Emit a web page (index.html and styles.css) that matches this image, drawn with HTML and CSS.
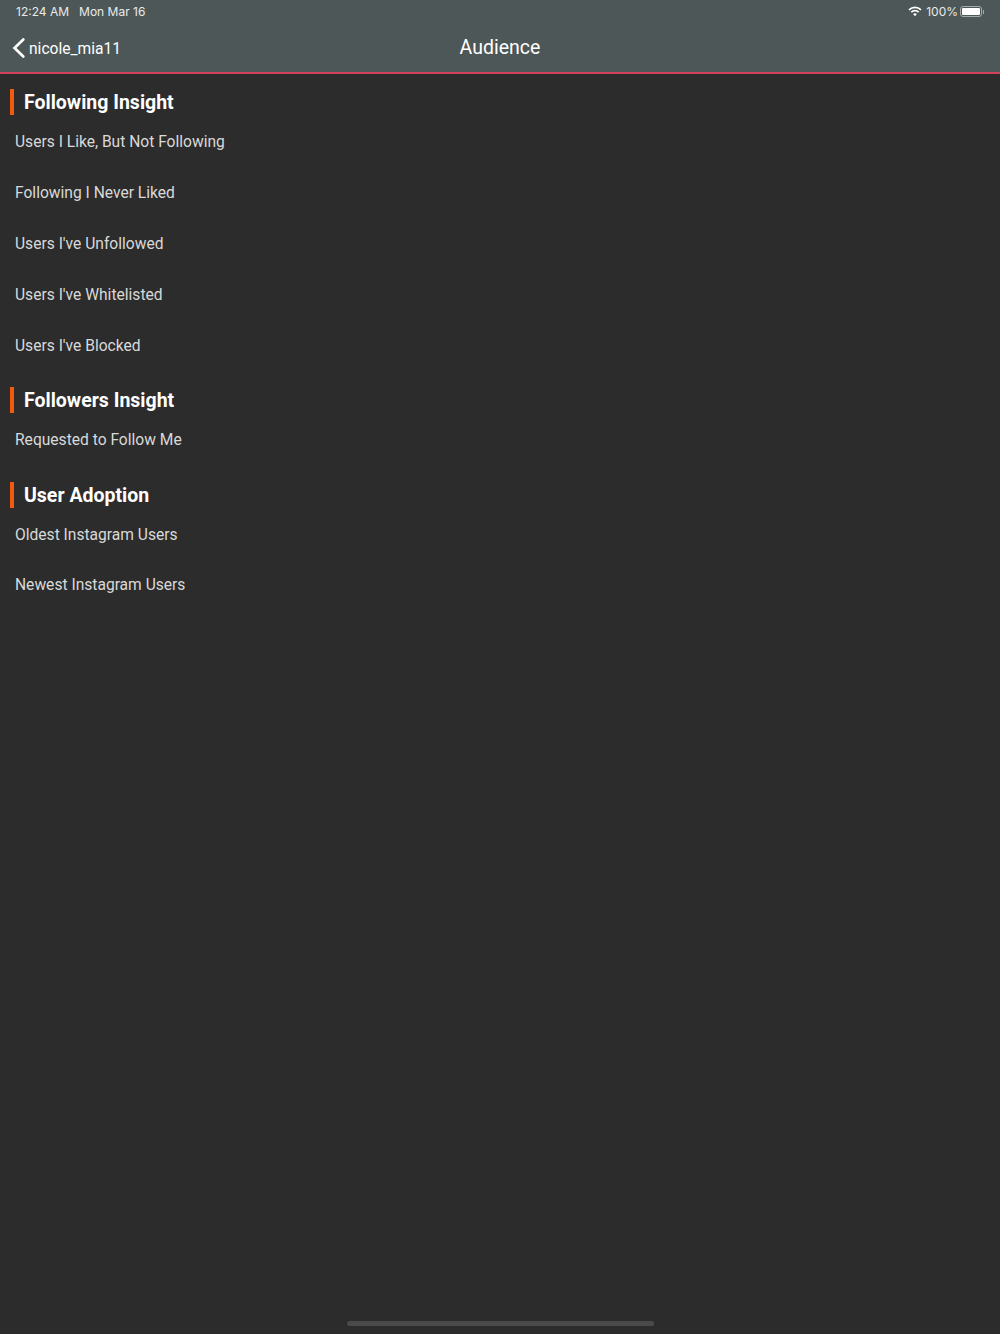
FILE: index.html
```html
<!DOCTYPE html>
<html lang="en">
<head>
    <meta charset="UTF-8">
    <title>Audience</title>
    <link rel="stylesheet" href="styles.css">
</head>
<body>
    <div class="screen">
        <!-- Status bar and navigation -->
        <header class="top-bar">
            <div class="status-bar">
                <div class="status-left">
                    <span>12:24 AM</span>
                    <span>Mon Mar 16</span>
                </div>
                <div class="status-right">
                    <svg class="wifi" width="14" height="11" viewBox="0 0 14 11">
                        <path d="M1 3.9 A8.6 8.6 0 0 1 13 3.9" fill="none" stroke="#fff" stroke-width="1.7"/>
                        <path d="M3.3 6.1 A5.3 5.3 0 0 1 10.7 6.1" fill="none" stroke="#fff" stroke-width="1.7"/>
                        <path d="M5.1 8.1 A2.7 2.7 0 0 1 8.9 8.1 L7 10.2 Z" fill="#fff"/>
                    </svg>
                    <span class="battery-pct">100%</span>
                    <div class="battery"><div class="battery-fill"></div></div>
                    <div class="battery-cap"></div>
                </div>
            </div>
            <nav class="nav-bar">
                <a class="back">
                    <svg width="13" height="20" viewBox="0 0 13 20">
                        <path d="M11.3 1.5 L2.5 10 L11.3 18.5" fill="none" stroke="#fff" stroke-width="2.6" stroke-linecap="round"/>
                    </svg>
                    <span class="back-label">nicole_mia11</span>
                </a>
                <div class="nav-title">Audience</div>
            </nav>
        </header>

        <main class="content">
            <section class="group">
                <h2 class="group-title">Following Insight</h2>
                <ul class="rows">
                    <li>Users I Like, But Not Following</li>
                    <li>Following I Never Liked</li>
                    <li>Users I've Unfollowed</li>
                    <li>Users I've Whitelisted</li>
                    <li>Users I've Blocked</li>
                </ul>
            </section>
            <section class="group">
                <h2 class="group-title">Followers Insight</h2>
                <ul class="rows">
                    <li>Requested to Follow Me</li>
                </ul>
            </section>
            <section class="group">
                <h2 class="group-title">User Adoption</h2>
                <ul class="rows">
                    <li>Oldest Instagram Users</li>
                    <li>Newest Instagram Users</li>
                </ul>
            </section>
        </main>

        <div class="home-bar"></div>
    </div>
</body>
</html>
```
FILE: styles.css
```css
html, body {
    margin: 0;
    padding: 0;
}

body {
    background-color: #2c2c2c;
    font-family: Roboto, "Liberation Sans", sans-serif;
    color: #fff;
}

.screen {
    height: 1334px;
    display: flex;
    flex-direction: column;
    overflow: hidden;
}

.top-bar {
    height: 72px;
    background-color: #4e5757;
    border-bottom: 2px solid #d2405a;
    flex-shrink: 0;
}

.status-bar {
    height: 23px;
    padding: 0 16px 0 16px;
    display: flex;
    justify-content: space-between;
    align-items: center;
    font-family: Inter, "Liberation Sans", sans-serif;
    font-size: 12px;
    color: #e8eaea;
}

.status-left {
    display: flex;
    gap: 10px;
}

.status-right {
    display: flex;
    align-items: center;
}

.wifi {
    margin-right: 4px;
}

.battery {
    width: 18px;
    height: 7px;
    padding: 1px;
    margin-left: 2px;
    border: 1px solid #a5abab;
    border-radius: 3px;
}

.battery-fill {
    height: 100%;
    background-color: #fff;
    border-radius: 1px;
}

.battery-cap {
    width: 1px;
    height: 4px;
    margin-left: 1px;
    background-color: #a5abab;
}

.nav-bar {
    height: 49px;
    display: flex;
    justify-content: center;
    align-items: center;
    position: relative;
}

.back {
    position: absolute;
    left: 12px;
    top: 15px;
    display: flex;
    align-items: flex-start;
    gap: 4px;
    font-size: 15.6px;
    line-height: 20px;
}

.back-label {
    padding-top: 1px;
}

.nav-title {
    font-size: 19.5px;
}

.content {
    flex: 1;
    padding-top: 15px;
}

.group {
    margin-bottom: 15.6px;
}

.group-title {
    margin: 0 0 2px 10px;
    padding-left: 10px;
    height: 26px;
    line-height: 28px;
    border-left: 4px solid #f4590f;
    font-size: 19.5px;
    font-weight: 700;
}

.rows {
    list-style: none;
    margin: 0;
    padding: 0;
}

.rows li {
    height: 50.9px;
    line-height: 50.9px;
    padding-left: 15px;
    font-size: 15.6px;
    color: #d9d9d9;
}

.home-bar {
    width: 307px;
    height: 5px;
    margin: 0 auto 8px;
    background-color: #4a4a4a;
    border-radius: 3px;
    flex-shrink: 0;
}
```
